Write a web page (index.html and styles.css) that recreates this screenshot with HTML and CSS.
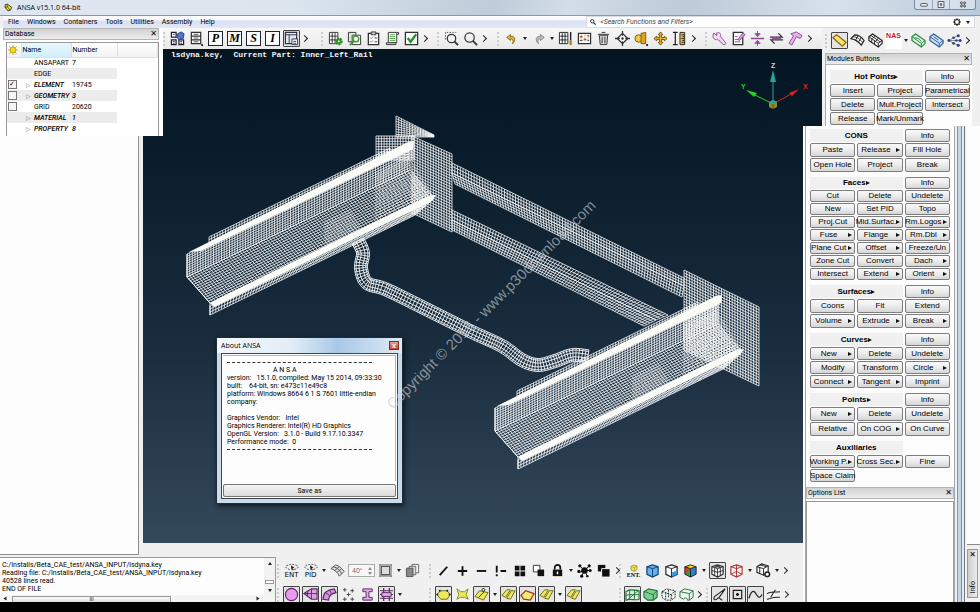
FILE: index.html
```html
<!DOCTYPE html>
<html lang="en">

<head>
    <meta charset="UTF-8">
    <meta name="viewport" content="width=device-width, initial-scale=1.0">
    <title>ANSA v15.1.0 64-bit</title>
    <link rel="stylesheet" href="styles.css">
</head>

<body>
    <!-- icon set -->
    <svg class="defs" aria-hidden="true">
        <symbol id="logo" viewBox="0 0 16 16"><path d="M2 3l4-1 8 6-3 5-4 1-5-6z" fill="#e8d420" stroke="#222" stroke-width="1.4"/><path d="M2 8l4-1 5 6M6 7V2" fill="none" stroke="#222"/></symbol>
        <symbol id="sun" viewBox="0 0 16 16"><path d="M8 0v16M0 8h16M2 2l12 12M14 2L2 14" stroke="#c9a400" stroke-width="1.4"/><circle cx="8" cy="8" r="4.5" fill="#ffd91c" stroke="#a88400"/></symbol>
        <symbol id="gear" viewBox="0 0 16 16"><circle cx="8" cy="8" r="5" fill="none" stroke="#222" stroke-width="2.4"/><path d="M8 0v3M8 13v3M0 8h3M13 8h3M2.5 2.5l2 2M11.5 11.5l2 2M13.5 2.5l-2 2M4.5 11.5l-2 2" stroke="#222" stroke-width="2"/></symbol>
        <symbol id="search" viewBox="0 0 16 16"><circle cx="6" cy="6" r="4.5" fill="none" stroke="#222" stroke-width="2.5"/><path d="M9.5 9.5L15 15" stroke="#222" stroke-width="3"/></symbol>
        <symbol id="parts" viewBox="0 0 16 16"><path d="M1.5 1.5h5v5h-5zM1.5 9.5h5v5h-5zM9.5 9.5h5v5h-5z" fill="#fff" stroke="#223" stroke-width="1.3"/><path d="M3 3.5h2M3 11h2M3 13h2M11 11h2M11 13h2" stroke="#223"/><path d="M8 3l4-2 3 2-1 5-4 1-3-2z" fill="#5673c4" stroke="#24408e"/></symbol>
        <symbol id="cabinet" viewBox="0 0 16 16"><path d="M2.5 1.5h10v4h-10zM2.5 5.5h10v4h-10zM2.5 9.5h10v4h-10z" fill="#fff" stroke="#333" stroke-width="1.3"/><path d="M5 3.5h5M5 7.5h5M5 11.5h5" stroke="#555"/><path d="M13 15h2" stroke="#222" stroke-width="2"/></symbol>
        <symbol id="docs" viewBox="0 0 16 16"><path d="M1.5 1.5h12v12h-12z" fill="#e4e6ee" stroke="#334" stroke-width="1.3"/><path d="M2 4h11M5.5 4v9" stroke="#334"/><path d="M8.5 8.5h6v6h-6z" fill="#fff" stroke="#334"/><path d="M10 11h3M10 13h3" stroke="#334"/></symbol>
        <symbol id="meshgear" viewBox="0 0 16 16"><path d="M1.5 1.5h9v12h-9zM4.5 2v11M7.5 2v11M2 5.5h8M2 9.5h8" fill="#fff" stroke="#333"/><circle cx="11.5" cy="11" r="3" fill="#3a9a2f" stroke="#2b8a22" stroke-width="2.4" stroke-dasharray="2 1"/><circle cx="11.5" cy="11" r="1" fill="#fff"/></symbol>
        <symbol id="copymag" viewBox="0 0 16 16"><path d="M1.5 1.5h8v10h-8z" fill="#dce9d8" stroke="#333"/><path d="M5.5 4.5h9v10h-9z" fill="#fff" stroke="#333"/><circle cx="9.5" cy="8.5" r="3" fill="none" stroke="#3a9a2f" stroke-width="1.5"/><path d="M7.5 11L3 15" stroke="#3a9a2f" stroke-width="2"/></symbol>
        <symbol id="clip" viewBox="0 0 16 16"><path d="M2.5 2.5h11v12h-11z" fill="#fff" stroke="#333" stroke-width="1.4"/><path d="M5.5 1h5v3h-5z" fill="#ccc" stroke="#333"/><path d="M4.5 7l1 1 2-2M4.5 11l1 1 2-2" fill="none" stroke="#3a9a2f"/><path d="M9 7.5h3M9 11.5h3" stroke="#444"/></symbol>
        <symbol id="scroll" viewBox="0 0 16 16"><path d="M3.5 1.5h9v11h-9z" fill="#fff" stroke="#333"/><path d="M1.5 12.5h10v2h-10zM12.5 1.5h2v2h-2" fill="#ddd" stroke="#333"/><path d="M5 4h6M5 6h6M5 8h6M5 10h6" stroke="#4aa53d"/></symbol>
        <symbol id="check" viewBox="0 0 16 16"><path d="M1.5 1.5h13v13h-13z" fill="#fff" stroke="#333" stroke-width="1.4"/><path d="M4 7.5l3 4 6-8" fill="none" stroke="#229320" stroke-width="2.4"/></symbol>
        <symbol id="zoomarea" viewBox="0 0 16 16"><path d="M1.5 9V1.5H13" fill="none" stroke="#444" stroke-dasharray="1.5 1.5"/><circle cx="8" cy="8" r="4.5" fill="none" stroke="#333" stroke-width="1.3"/><path d="M11 11l4 4" stroke="#333" stroke-width="2"/></symbol>
        <symbol id="zoom" viewBox="0 0 16 16"><circle cx="7" cy="7" r="5" fill="none" stroke="#333" stroke-width="1.3"/><path d="M10.5 10.5L15 15" stroke="#333" stroke-width="2"/></symbol>
        <symbol id="undo" viewBox="0 0 16 16"><path d="M1 6l5-4v2.5c6-1 8 5 2.5 10 2-5 0-7-2.5-6.500V10z" fill="#e6b523" stroke="#6b5310"/></symbol>
        <symbol id="redo" viewBox="0 0 16 16"><path d="M15 6l-5-4v2.5c-6-1-8 5-2.5 10-2-5 0-7 2.5-6.500V10z" fill="#bbb" stroke="#777"/></symbol>
        <symbol id="meshbrush" viewBox="0 0 16 16"><path d="M1.5 1.5h9v12h-9zM4.5 2v11M7.5 2v11M2 5.5h8M2 9.5h8" fill="#fff" stroke="#222"/><path d="M13.5 1v9" stroke="#222" stroke-width="1.5"/><path d="M13.5 10v5" stroke="#b97b23" stroke-width="2.5"/></symbol>
        <symbol id="sliders" viewBox="0 0 16 16"><path d="M1.5 2.5h13v11h-13z" fill="#fff" stroke="#333" stroke-width="1.3"/><path d="M4.5 4v8M8.5 4v8M12 4v8" stroke="#777" stroke-dasharray="1 1"/><path d="M3 6h3M7 9h3M11 5h2" stroke="#c0561b" stroke-width="1.6"/><path d="M3 10h3M11 10h2" stroke="#444"/></symbol>
        <symbol id="trash" viewBox="0 0 16 16"><path d="M3.5 4.5h9l-1 10h-7z" fill="#d8d8d8" stroke="#333"/><path d="M2 3.5h12M6 1.5h4M6.5 6v7M9.5 6v7" stroke="#333"/></symbol>
        <symbol id="target" viewBox="0 0 16 16"><path d="M8 2.5L13.5 8 8 13.5 2.5 8z" fill="#fff" stroke="#333" stroke-width="1.4"/><path d="M8 0v5M8 11v5M0 8h5M11 8h5" stroke="#333" stroke-width="1.4"/><circle cx="8" cy="8" r="1.3" fill="#333"/></symbol>
        <symbol id="shapes" viewBox="0 0 16 16"><circle cx="5" cy="8" r="4" fill="#f1c741" stroke="#7c5b0d"/><path d="M7.5 2.5l5-1v12h-5z" fill="#e0a31d" stroke="#7c5b0d"/><path d="M13 15h2" stroke="#222" stroke-width="2"/></symbol>
        <symbol id="move" viewBox="0 0 16 16"><path d="M8 1l2.5 3H9v3h3V5.5L15 8l-3 2.5V9H9v3h1.5L8 15l-2.5-3H7V9H4v1.5L1 8l3-2.5V7h3V4H5.5z" fill="#f0bd2c" stroke="#443208" stroke-width=".8"/></symbol>
        <symbol id="ruler" viewBox="0 0 16 16"><path d="M1 1.5h5M1 14.5h5M3.5 2v12" stroke="#222" stroke-width="1.3"/><path d="M8.5 1.5h5v13h-5z" fill="#efbf3c" stroke="#222"/><path d="M10 4h3M11 6h2M10 8h3M11 10h2M10 12h3" stroke="#222"/></symbol>
        <symbol id="wrench" viewBox="0 0 16 16"><path d="M2 2l3 3V2c3-1 5 1 4 4l6 7-2 2-7-6c-3 1-5-1-5-4z" fill="#f2dcf4" stroke="#91489a"/></symbol>
        <symbol id="note" viewBox="0 0 16 16"><path d="M2.5 1.5h10v13h-10z" fill="#fff" stroke="#333" stroke-width="1.4"/><path d="M4 9h6M4 11.5h6M4 6h3" stroke="#91489a"/><path d="M7 9l6-7 2 2-6 6z" fill="#d49adb" stroke="#91489a"/></symbol>
        <symbol id="align" viewBox="0 0 16 16"><path d="M1 8h14" stroke="#91489a" stroke-width="1.6"/><path d="M5 3h6M5 13h6" stroke="#333"/><path d="M8 0v5M6 4l2 2 2-2zM8 16v-5M6 12l2-2 2 2z" fill="#91489a" stroke="#91489a"/></symbol>
        <symbol id="swap" viewBox="0 0 16 16"><path d="M1 6.5h13l-4-4M15 9.5H2l4 4" fill="none" stroke="#333" stroke-width="1.4"/><path d="M3 8h10" stroke="#91489a"/></symbol>
        <symbol id="hammer" viewBox="0 0 16 16"><path d="M3 3l6-2 6 4-2 3-4-2-5 9-3-2 5-8z" fill="#e3b5e8" stroke="#91489a"/></symbol>
        <symbol id="surf-y" viewBox="0 0 16 16"><path d="M1 5l4-3 10 8-4 4z" fill="#f6ea62" stroke="#8c5f12" stroke-width="1.3"/></symbol>
        <symbol id="surf-k" viewBox="0 0 16 16"><path d="M1 6l4-4c4 0 7 2 10 6l-3 5C9 9 6 7 1 6z" fill="#fff" stroke="#222" stroke-width="1.3"/><path d="M3 4c5 0 8 3 10.5 6.5M6 7.5l3-5M9 9.5l3.5-5" fill="none" stroke="#222"/></symbol>
        <symbol id="solid-k" viewBox="0 0 16 16"><path d="M1 4l4-3 10 7v3l-4 4L1 8z" fill="#fff" stroke="#222" stroke-width="1.3"/><path d="M1 4l10 7 4-3M11 11v4M3 2.5l10 7M4 6v4M7 8v4M8 3L4.5 6M11 5.5L8 9" fill="none" stroke="#222"/></symbol>
        <symbol id="solid-g" viewBox="0 0 16 16"><path d="M1 4l4-3 10 7v3l-4 4L1 8z" fill="#dff3e2" stroke="#258a3c" stroke-width="1.3"/><path d="M1 4l10 7 4-3M11 11v4M4 5l4 1 3 3" fill="none" stroke="#258a3c"/></symbol>
        <symbol id="solid-b" viewBox="0 0 16 16"><path d="M1 4l4-3 10 7v3l-4 4L1 8z" fill="#cfe0f5" stroke="#2d5f9c" stroke-width="1.3"/><path d="M1 4l10 7 4-3M11 11v4M5 4l5 3.5" fill="none" stroke="#2d5f9c"/></symbol>
        <symbol id="dots" viewBox="0 0 16 16"><path d="M2 8l9-5M2 8h11M2 8l9 5" stroke="#888"/><g fill="#24408e"><circle cx="2" cy="8" r="1.5"/><circle cx="12" cy="3" r="1.6"/><circle cx="14" cy="8" r="1.6"/><circle cx="10" cy="8" r="1.4"/><circle cx="12" cy="13" r="1.6"/><circle cx="7" cy="11" r="1.4"/><circle cx="7" cy="5" r="1.4"/></g></symbol>
        <symbol id="cursor" viewBox="0 0 16 8"><ellipse cx="8" cy="4" rx="7" ry="3" fill="none" stroke="#333" stroke-dasharray="2 1.5"/><path d="M7 2l4 3h-2l1 2.5-1 .5-1-2.5-1 1z" fill="#222"/></symbol>
        <symbol id="sheet" viewBox="0 0 16 16"><path d="M1 6l5-4c4 1 7 4 9 7l-5 5C8 10 5 7 1 6z" fill="#ddd" stroke="#555"/><path d="M3.5 4c5 1 7 4 9 7.5M5 8l5-4M7.5 10l5-4" fill="none" stroke="#555"/></symbol>
        <symbol id="frame" viewBox="0 0 16 16"><path d="M3.5 3.5h9v9h-9z" fill="#ddd" stroke="#555" stroke-width="1.4"/><path d="M2 1v14M14 1v14M1 2h14M1 14h14" stroke="#777"/></symbol>
        <symbol id="layers" viewBox="0 0 16 16"><path d="M7.5 1.5h7v9h-7z" fill="#fff" stroke="#666"/><path d="M4.5 3.5h7v9h-7z" fill="#ddd" stroke="#666"/><path d="M1.5 5.5h7v9h-7z" fill="#888" stroke="#555"/></symbol>
        <symbol id="slash" viewBox="0 0 16 16"><path d="M4 13l8-9" stroke="#111" stroke-width="2"/></symbol>
        <symbol id="plus" viewBox="0 0 16 16"><path d="M3 8.5h10M8 3.5v10" stroke="#111" stroke-width="2"/></symbol>
        <symbol id="minus" viewBox="0 0 16 16"><path d="M3 8.5h10" stroke="#111" stroke-width="2"/></symbol>
        <symbol id="bang" viewBox="0 0 16 16"><path d="M4 3v7M4 12v2M8 8.5h6" stroke="#111" stroke-width="2"/></symbol>
        <symbol id="tiles" viewBox="0 0 16 16"><path d="M3 3h5v5H3zM9 3h5v5H9zM3 9h5v5H3zM9 9h5v5H9z" fill="#111"/></symbol>
        <symbol id="invert" viewBox="0 0 16 16"><path d="M2.5 2.5h7v7h-7z" fill="#fff" stroke="#333"/><path d="M7 7h7v7H7z" fill="#111"/></symbol>
        <symbol id="lock" viewBox="0 0 16 16"><path d="M3 7h10v7H3z" fill="#111"/><path d="M5 7V5c0-4 6-4 6 0v2" fill="none" stroke="#111" stroke-width="1.8"/><path d="M8 9v3" stroke="#fff" stroke-width="1.6"/></symbol>
        <symbol id="splat" viewBox="0 0 16 16"><path d="M8 8L3 3M8 8l5-5M8 8l-6 2M8 8h6M8 8l-3 6M8 8l3 6" stroke="#111"/><g fill="#111"><circle cx="8" cy="8" r="3.5"/><circle cx="3" cy="3" r="1.7"/><circle cx="13" cy="3" r="1.7"/><circle cx="2" cy="9" r="1.7"/><circle cx="14" cy="8" r="1.7"/><circle cx="5" cy="14" r="1.7"/><circle cx="11" cy="14" r="1.3"/></g></symbol>
        <symbol id="dup" viewBox="0 0 16 16"><path d="M2 2h8v7H2z" fill="#111"/><path d="M6 6h9v9H6z" fill="#111" stroke="#fff"/></symbol>
        <symbol id="box-y" viewBox="0 0 16 16"><path d="M2 5l5-3 7 2v7l-5 4-7-3z" fill="#f0e64a" stroke="#8f8612" stroke-width="1.4"/><path d="M2 5l7 2 5-3M9 7v8" fill="none" stroke="#8f8612"/></symbol>
        <symbol id="box-b" viewBox="0 0 16 16"><path d="M2 4l6-2 6 2v8l-6 3-6-3z" fill="#63b1ee" stroke="#163f73" stroke-width="1.3"/><path d="M2 4l6 2 6-2M8 6v9" fill="none" stroke="#163f73"/></symbol>
        <symbol id="box-w" viewBox="0 0 16 16"><path d="M2 4l6-2 6 2v8l-6 3-6-3z" fill="#fff" stroke="#222" stroke-width="1.3"/><path d="M8 10l6-2v4l-6 3z" fill="#3b9be0"/><path d="M2 4l6 2 6-2M8 6v9" fill="none" stroke="#222"/></symbol>
        <symbol id="box-c" viewBox="0 0 16 16"><path d="M2 4l6-2 6 2-6 2z" fill="#f0d21b"/><path d="M2 4l6 2v9l-6-3z" fill="#2c9b45"/><path d="M8 6l6-2v8l-6 3z" fill="#2f7bd0"/><path d="M2 4l4 1v4l-4 2z" fill="#dc3a22"/><path d="M2 4l6-2 6 2v8l-6 3-6-3zM2 4l6 2 6-2M8 6v9" fill="none" stroke="#222"/></symbol>
        <symbol id="box-m" viewBox="0 0 16 16"><path d="M2 4l6-2 6 2v8l-6 3-6-3z" fill="#fff" stroke="#222" stroke-width="1.2"/><path d="M2 4l6 2 6-2M8 6v9M2 8l6 2 6-2M5 5v8M11 5v8M5 3l6 2M11 3L5 5" fill="none" stroke="#222" stroke-width=".9"/></symbol>
        <symbol id="box-r" viewBox="0 0 16 16"><path d="M2 4l6-2 6 2v8l-6 3-6-3z" fill="#fdf0f0" stroke="#a33" stroke-width="1.2"/><path d="M2 4l6 2 6-2M8 6v9M2 12l6-3 6 3M8 2v7" fill="none" stroke="#a33"/></symbol>
        <symbol id="box-g" viewBox="0 0 16 16"><path d="M1 4l5-3 7 2v7l-5 3-7-3z" fill="#fff" stroke="#222" stroke-width="1.2"/><path d="M1 4l7 2 5-3M8 6v7M4 2l7 2M4 5v6" fill="none" stroke="#222"/><circle cx="12" cy="12" r="2.5" fill="#fff" stroke="#222" stroke-width="1.6"/></symbol>
        <symbol id="ball" viewBox="0 0 16 16"><circle cx="8" cy="8" r="6.5" fill="#e79bf0" stroke="#5a2a63" stroke-width="1.2"/></symbol>
        <symbol id="wedge" viewBox="0 0 16 16"><path d="M1 7l8-5h6v11H9z" fill="#e0a3e8" stroke="#5a2a63" stroke-width="1.2"/><path d="M9 2v11M1 7h14M5 4v6" stroke="#5a2a63"/></symbol>
        <symbol id="bend" viewBox="0 0 16 16"><path d="M1 13c0-7 4-10 12-11l2 4c-5 1-8 3-8 8z" fill="#d98fe3" stroke="#5a2a63" stroke-width="1.2"/><path d="M4 6l4 3M8 3l2 4" stroke="#5a2a63"/></symbol>
        <symbol id="plusses" viewBox="0 0 16 16"><path d="M4 1v4M2 3h4M12 2v4M10 4h4M8 6v4M6 8h4M4 11v4M2 13h4M12 11v4M10 13h4" stroke="#444"/></symbol>
        <symbol id="beam" viewBox="0 0 16 16"><path d="M3 2h10v3H9.5v6H13v3H3v-3h3.5V5H3z" fill="#e3a7eb" stroke="#5a2a63"/></symbol>
        <symbol id="net" viewBox="0 0 16 16"><path d="M1 4h14M1 8h14M1 12h14M5 1v14M11 1v14" stroke="#5a2a63" stroke-width="1.3"/><path d="M3 6h10v4H3z" fill="#e3a7eb" stroke="#5a2a63"/></symbol>
        <symbol id="yel" viewBox="0 0 16 16"><path d="M1 8l4-4h7l3 4-3 5H5z" fill="#eee95a" stroke="#6f6b12"/><path d="M4 4h.1M12 4h.1M1.5 8h.1M14.5 8h.1" stroke="#222" stroke-width="2" stroke-linecap="round"/></symbol>
        <symbol id="yel-star" viewBox="0 0 16 16"><path d="M2 2l4 3h4l4-3-2 6 2 5-4-2H6l-4 2 2-5z" fill="#eee95a" stroke="#8a861c"/></symbol>
        <symbol id="yel-cut" viewBox="0 0 16 16"><path d="M1 10l5-6 9 2-5 8z" fill="#eee95a" stroke="#6f6b12"/><path d="M5 11l6-6" stroke="#333"/><circle cx="10" cy="3" r="1.5" fill="#fff" stroke="#222"/></symbol>
        <symbol id="yel-two" viewBox="0 0 16 16"><path d="M1 9l5-6h4l-5 8zM6 12l5-8h4l-5 9z" fill="#eee95a" stroke="#6f6b12"/></symbol>
        <symbol id="yel-red" viewBox="0 0 16 16"><path d="M1 9l5-5 9 3-4 7-7-1z" fill="#f2ec70" stroke="#a5361c" stroke-width="1.3"/></symbol>
        <symbol id="grn-mesh" viewBox="0 0 16 16"><path d="M1 5c4-3 7-2 14-1v9c-5 2-8-1-14 1z" fill="#dff3e2" stroke="#22703a" stroke-width="1.2"/><path d="M1 9c5-2 9 0 14-1M5 3v10M10 3v10M2 14L14 4" fill="none" stroke="#22703a"/></symbol>
        <symbol id="grn-solid" viewBox="0 0 16 16"><path d="M1 5l5-3 9 2v7l-4 3H5L1 11z" fill="#7fcf93" stroke="#22703a" stroke-width="1.2"/><path d="M1 5c4 0 6 3 10 3l4-4M11 8v6" fill="none" stroke="#22703a"/></symbol>
        <symbol id="grn-dot" viewBox="0 0 16 16"><path d="M1 5l5-3 9 2v7l-4 3H5L1 11z" fill="#e8f5ea" stroke="#222" stroke-dasharray="2 1"/><path d="M1 5c4 0 6 3 10 3l4-4M11 8v6M5 6v7M8 3v9" fill="none" stroke="#222" stroke-dasharray="2 1"/></symbol>
        <symbol id="grn-line" viewBox="0 0 16 16"><path d="M1 5l5-3 9 2v7l-4 3H9c0-3-3-3-4-1l-4-2z" fill="#eef8f0" stroke="#22703a"/><path d="M1 5l10 2 4-3M11 7v7" fill="none" stroke="#22703a"/></symbol>
        <symbol id="pen" viewBox="0 0 16 16"><path d="M14 2L3 10c-3 3 1 5 3 2 2-2 3 2 5 2M14 2L7 12" fill="none" stroke="#222" stroke-width="1.2"/></symbol>
        <symbol id="point" viewBox="0 0 16 16"><path d="M3.5 3.5h9v9h-9z" fill="none" stroke="#222" stroke-width="1.3"/><circle cx="8" cy="8" r="1.5"/></symbol>
        <symbol id="curve" viewBox="0 0 16 16"><path d="M1 12C4 2 7 4 9 8s4 4 6 0" fill="none" stroke="#222" stroke-width="1.3"/></symbol>
        <symbol id="curves" viewBox="0 0 16 16"><path d="M1 7c4-3 8-1 14-2M1 13c4 0 5-3 14-2M5 11l5-8" fill="none" stroke="#222" stroke-width="1.1"/></symbol>
    </svg>

    <header class="titlebar">
        <svg class="app-logo"><use href="#logo"/></svg>
        <h1>ANSA v15.1.0 64-bit</h1>
        <div class="window-buttons">
            <button aria-label="Minimize"><svg viewBox="0 0 12 8"><rect x="2" y="3" width="8" height="3" rx="1" fill="#fff" stroke="#333"/></svg></button>
            <button aria-label="Restore"><svg viewBox="0 0 12 8"><path d="M2.5 .5h7v7h-7zM5 3h2v2H5z" fill="#fff" stroke="#333"/></svg></button>
            <button class="wide" aria-label="Close window"><svg viewBox="0 0 12 8"><path d="M3 1l6 6M9 1L3 7" stroke="#333" stroke-width="2.6"/><path d="M3 1l6 6M9 1L3 7" stroke="#fff"/></svg></button>
        </div>
    </header>

    <div class="menubar">
        <nav>
            <button>File</button>
            <button>Windows</button>
            <button>Containers</button>
            <button>Tools</button>
            <button>Utilities</button>
            <button>Assembly</button>
            <button>Help</button>
        </nav>
        <div class="search">
            <svg><use href="#search"/></svg>
            <input type="text" aria-label="Search" placeholder="&lt;Search Functions and Filters&gt;">
            <svg class="search-gear"><use href="#gear"/></svg>
            <i class="caret"></i>
        </div>
    </div>

    <main class="workspace">
        <section class="viewport">
            <p class="status">lsdyna.key,&nbsp; Current Part: Inner_Left_Rail</p>
            <svg class="scene" viewBox="143 49 679 494">
                <g id="mesh"></g>
                <g class="triad">
                    <path d="M773 104V76" stroke="#2aa39c"/><path d="M770 82l3-12 3 12z" fill="#2aa39c"/>
                    <path d="M773 104l20-11" stroke="#e02020"/><path d="M789 93l10-4-7 7z" fill="#e02020"/>
                    <path d="M773 104l-20-10" stroke="#22d322"/><path d="M757 93l-11-3 8 7z" fill="#22d322"/>
                    <path d="M769 102l4-2 4 2v5l-4 2-4-2z" fill="#8f8a2a"/><path d="M769 102l4 2 4-2-4-2z" fill="#27a0a8"/><path d="M773 104v5" stroke="#55521a"/>
                    <text x="771" y="68" fill="#c8d4dc">Z</text>
                    <text x="803" y="89" fill="#e02020">X</text>
                    <text x="741" y="89" fill="#22d322">Y</text>
                </g>
            </svg>

            <div class="dialog" role="dialog" aria-label="About ANSA">
                <div class="dialog-title">
                    <h2>About ANSA</h2>
                    <button aria-label="Close">x</button>
                </div>
                <div class="dialog-body">
                    <div class="dialog-text">
                        <hr>
                        <p class="product">A N S A</p>
                        <p>version:&nbsp;&nbsp; 15.1.0, compiled: May 15 2014, 09:33:30</p>
                        <p>built:&nbsp;&nbsp;&nbsp; 64-bit, sn: e473c11e49c8</p>
                        <p>platform: Windows 8664 6 1 S 7601 little-endian</p>
                        <p>company:</p>
                        <p>&nbsp;</p>
                        <p>Graphics Vendor:&nbsp;&nbsp; Intel</p>
                        <p>Graphics Renderer: Intel(R) HD Graphics</p>
                        <p>OpenGL Version:&nbsp;&nbsp; 3.1.0 - Build 9.17.10.3347</p>
                        <p>Performance mode:&nbsp; 0</p>
                        <hr>
                    </div>
                    <button class="save">Save as</button>
                </div>
            </div>

            <svg class="scene overlay" viewBox="143 49 679 494">
                <text class="watermark" transform="translate(393 410) rotate(-45)">Copyright © 2015 - www.p30download.com</text>
            </svg>
        </section>

        <section class="database">
            <header class="panel-title"><h2>Database</h2><button aria-label="Close panel">✕</button></header>
            <div class="tree">
                <table>
                    <thead>
                        <tr><th class="c-check"><svg><use href="#sun"/></svg></th><th class="c-name">Name</th><th class="c-number">Number</th><th></th></tr>
                    </thead>
                    <tbody>
                        <tr><td></td><td class="leaf">ANSAPART</td><td>7</td><td></td></tr>
                        <tr><td></td><td class="leaf">EDGE</td><td></td><td></td></tr>
                        <tr class="branch"><td><input type="checkbox" aria-label="ELEMENT" checked></td><td><span>▷</span>ELEMENT</td><td class="plain">19745</td><td></td></tr>
                        <tr class="branch"><td><input type="checkbox" aria-label="GEOMETRY"></td><td><span>▷</span>GEOMETRY</td><td>3</td><td></td></tr>
                        <tr><td><input type="checkbox" aria-label="GRID"></td><td class="leaf">GRID</td><td>20620</td><td></td></tr>
                        <tr class="branch"><td></td><td><span>▷</span>MATERIAL</td><td>1</td><td></td></tr>
                        <tr class="branch"><td></td><td><span>▷</span>PROPERTY</td><td>8</td><td></td></tr>
                    </tbody>
                </table>
            </div>
        </section>

        <div class="tree-rest"></div>

        <div class="toolbar top-tools">
            <div class="group g1">
                <button class="tool"><svg><use href="#parts"/></svg></button>
                <button class="tool"><svg><use href="#cabinet"/></svg></button>
                <button class="tool letter">P</button>
                <button class="tool letter">M</button>
                <button class="tool letter">S</button>
                <button class="tool letter">I</button>
                <button class="tool on"><svg><use href="#docs"/></svg></button>
                <i class="more"></i>
            </div>
            <div class="group g2">
                <button class="tool"><svg><use href="#meshgear"/></svg></button>
                <button class="tool"><svg><use href="#copymag"/></svg></button>
                <button class="tool"><svg><use href="#clip"/></svg></button>
                <button class="tool"><svg><use href="#scroll"/></svg></button>
                <button class="tool"><svg><use href="#check"/></svg></button>
                <i class="more"></i>
            </div>
            <div class="group g3">
                <button class="tool"><svg><use href="#zoomarea"/></svg></button>
                <button class="tool"><svg><use href="#zoom"/></svg></button>
                <i class="more"></i>
            </div>
            <div class="group g4">
                <button class="tool small"><svg><use href="#undo"/></svg></button>
                <i class="caret"></i>
                <button class="tool small"><svg><use href="#redo"/></svg></button>
                <i class="caret"></i>
                <button class="tool"><svg><use href="#meshbrush"/></svg></button>
                <button class="tool"><svg><use href="#sliders"/></svg></button>
                <button class="tool"><svg><use href="#trash"/></svg></button>
                <button class="tool"><svg><use href="#target"/></svg></button>
                <button class="tool"><svg><use href="#shapes"/></svg></button>
                <button class="tool"><svg><use href="#move"/></svg></button>
                <button class="tool"><svg><use href="#ruler"/></svg></button>
                <i class="more"></i>
            </div>
            <div class="group g5">
                <button class="tool"><svg><use href="#wrench"/></svg></button>
                <button class="tool"><svg><use href="#note"/></svg></button>
                <button class="tool"><svg><use href="#align"/></svg></button>
                <button class="tool"><svg><use href="#swap"/></svg></button>
                <button class="tool"><svg><use href="#hammer"/></svg></button>
                <i class="more"></i>
            </div>
        </div>

        <section class="modules">
            <div class="toolbar module-tools">
                <div class="group">
                    <button class="tool on"><svg><use href="#surf-y"/></svg></button>
                    <button class="tool"><svg><use href="#surf-k"/></svg></button>
                    <button class="tool"><svg><use href="#solid-k"/></svg></button>
                    <button class="tool nas">NAS</button>
                    <i class="caret"></i>
                    <button class="tool"><svg><use href="#solid-g"/></svg></button>
                    <button class="tool"><svg><use href="#solid-b"/></svg></button>
                    <button class="tool"><svg><use href="#dots"/></svg></button>
                    <i class="more"></i>
                </div>
            </div>
            <header class="panel-title"><h2>Modules Buttons</h2><button aria-label="Close panel">✕</button></header>
            <div class="module-body">
                <div class="cmds">
                    <h3>Hot Points<i class="arrow"></i></h3><button>Info</button>
                    <button>Insert</button><button>Project</button><button>Parametrical</button>
                    <button>Delete</button><button>Mult.Project</button><button>Intersect</button>
                    <button>Release</button><button>Mark/Unmark</button>
                </div>
            </div>
        </section>

        <section class="side">
            <div class="side-main">
                <div class="groups">
                    <div class="cmds roomy">
                        <h3>CONS</h3><button>Info</button>
                        <button>Paste</button><button class="sub">Release</button><button>Fill Hole</button>
                        <button>Open Hole</button><button>Project</button><button>Break</button>
                    </div>
                    <div class="cmds tight">
                        <h3>Faces<i class="arrow"></i></h3><button>Info</button>
                        <button>Cut</button><button>Delete</button><button>Undelete</button>
                        <button>New</button><button>Set PID</button><button>Topo</button>
                        <button>Proj.Cut</button><button class="sub">Mid.Surfac.</button><button class="sub">Rm.Logos</button>
                        <button class="sub">Fuse</button><button class="sub">Flange</button><button class="sub">Rm.Dbl</button>
                        <button class="sub">Plane Cut</button><button class="sub">Offset</button><button>Freeze/Un</button>
                        <button>Zone Cut</button><button>Convert</button><button class="sub">Dach</button>
                        <button>Intersect</button><button class="sub">Extend</button><button class="sub">Orient</button>
                    </div>
                    <div class="cmds roomy">
                        <h3>Surfaces<i class="arrow"></i></h3><button>Info</button>
                        <button>Coons</button><button>Fit</button><button>Extend</button>
                        <button class="sub">Volume</button><button class="sub">Extrude</button><button class="sub">Break</button>
                    </div>
                    <div class="cmds">
                        <h3>Curves<i class="arrow"></i></h3><button>Info</button>
                        <button class="sub">New</button><button>Delete</button><button>Undelete</button>
                        <button>Modify</button><button>Transform</button><button class="sub">Circle</button>
                        <button class="sub">Connect</button><button class="sub">Tangent</button><button>Imprint</button>
                    </div>
                    <div class="cmds roomy">
                        <h3>Points<i class="arrow"></i></h3><button>Info</button>
                        <button class="sub">New</button><button>Delete</button><button>Undelete</button>
                        <button>Relative</button><button class="sub">On COG</button><button>On Curve</button>
                    </div>
                    <div class="cmds">
                        <h3>Auxiliaries</h3><span></span>
                        <button class="sub">Working P.</button><button class="sub">Cross Sec.</button><button>Fine</button>
                        <button>Space Claim</button>
                    </div>
                </div>
                <header class="panel-title"><h2>Options List</h2><button aria-label="Close panel">✕</button></header>
                <div class="options"></div>
            </div>
            <div class="side-frame"></div>
            <div class="side-info">
                <div class="info-blank"></div>
                <div class="info-tab"><button aria-label="Close info">✕</button><span>Info</span></div>
            </div>
        </section>

        <section class="bottom">
            <div class="log">
                <div class="log-text">
                    <p>C:/Installs/Beta_CAE_test/ANSA_INPUT/lsdyna.key</p>
                    <p>Reading file: C:/Installs/Beta_CAE_test/ANSA_INPUT/lsdyna.key</p>
                    <p>40528 lines read.</p>
                    <p>END OF FILE</p>
                </div>
                <div class="vscroll"><i class="caret up"></i><b></b><i class="caret"></i></div>
                <div class="hscroll"><i class="caret left"></i><b>III</b><i class="caret right"></i></div>
            </div>
            <div class="bottom-tools">
                <div class="toolbar">
                    <div class="group b1">
                        <button class="tool text"><svg><use href="#cursor"/></svg>ENT</button>
                        <button class="tool text"><svg><use href="#cursor"/></svg>PID</button>
                        <i class="caret"></i>
                        <button class="tool"><svg><use href="#sheet"/></svg></button>
                        <span class="angle"><input type="text" aria-label="Angle" value="40°"><span><i class="caret up"></i><i class="caret"></i></span></span>
                        <button class="tool"><svg><use href="#frame"/></svg></button>
                        <i class="caret"></i>
                        <button class="tool"><svg><use href="#layers"/></svg></button>
                    </div>
                    <div class="group b2">
                        <button class="tool"><svg><use href="#slash"/></svg></button>
                        <button class="tool"><svg><use href="#plus"/></svg></button>
                        <button class="tool"><svg><use href="#minus"/></svg></button>
                        <button class="tool"><svg><use href="#bang"/></svg></button>
                        <button class="tool"><svg><use href="#tiles"/></svg></button>
                        <button class="tool"><svg><use href="#invert"/></svg></button>
                        <button class="tool"><svg><use href="#lock"/></svg></button>
                        <i class="caret"></i>
                        <button class="tool"><svg><use href="#splat"/></svg></button>
                        <button class="tool"><svg><use href="#dup"/></svg></button>
                        <i class="more"></i>
                    </div>
                    <div class="group b3">
                        <button class="tool text tiny"><svg><use href="#box-y"/></svg>ENT.</button>
                        <button class="tool"><svg><use href="#box-b"/></svg></button>
                        <button class="tool"><svg><use href="#box-w"/></svg></button>
                        <button class="tool"><svg><use href="#box-c"/></svg></button>
                        <i class="caret"></i>
                        <button class="tool on"><svg><use href="#box-m"/></svg></button>
                        <button class="tool"><svg><use href="#box-r"/></svg></button>
                        <i class="caret"></i>
                        <button class="tool"><svg><use href="#box-g"/></svg></button>
                        <i class="caret"></i>
                        <i class="more"></i>
                    </div>
                </div>
                <div class="toolbar">
                    <div class="group b1">
                        <button class="tool on"><svg><use href="#ball"/></svg></button>
                        <button class="tool on"><svg><use href="#wedge"/></svg></button>
                        <button class="tool on"><svg><use href="#bend"/></svg></button>
                        <button class="tool"><svg><use href="#plusses"/></svg></button>
                        <button class="tool"><svg><use href="#beam"/></svg></button>
                        <button class="tool on"><svg><use href="#net"/></svg></button>
                        <i class="caret"></i>
                    </div>
                    <div class="group b2">
                        <button class="tool on"><svg><use href="#yel"/></svg></button>
                        <button class="tool"><svg><use href="#yel-star"/></svg></button>
                        <button class="tool on"><svg><use href="#yel-cut"/></svg></button>
                        <i class="caret"></i>
                        <button class="tool on"><svg><use href="#yel-two"/></svg></button>
                        <button class="tool on"><svg><use href="#yel-red"/></svg></button>
                        <button class="tool on"><svg><use href="#yel-two"/></svg></button>
                        <i class="caret"></i>
                        <button class="tool on"><svg><use href="#yel-two"/></svg></button>
                    </div>
                    <div class="group b4">
                        <button class="tool on"><svg><use href="#grn-mesh"/></svg></button>
                        <button class="tool"><svg><use href="#grn-solid"/></svg></button>
                        <button class="tool"><svg><use href="#grn-dot"/></svg></button>
                        <button class="tool"><svg><use href="#grn-line"/></svg></button>
                        <i class="more"></i>
                    </div>
                    <div class="group b5">
                        <button class="tool on"><svg><use href="#pen"/></svg></button>
                        <button class="tool on"><svg><use href="#point"/></svg></button>
                        <button class="tool on"><svg><use href="#curve"/></svg></button>
                        <button class="tool"><svg><use href="#curves"/></svg></button>
                        <i class="more"></i>
                    </div>
                </div>
            </div>
        </section>
    </main>

    <footer class="edge"></footer>

    <script src="mesh.js"></script>
</body>

</html>
```

FILE: styles.css
```css
* {
    box-sizing: border-box;
}

body {
    margin: 0;
    height: 100vh;
    display: flex;
    flex-direction: column;
    overflow: hidden;
    background: #f0f0f0;
    color: #000;
    font: 7px/8px Roboto, "Liberation Sans", sans-serif;
}

h1, h2, h3, p {
    margin: 0;
    font-size: inherit;
    font-weight: normal;
}

button, input {
    margin: 0;
    padding: 0;
    border: 0;
    background: none;
    color: inherit;
    font: inherit;
}

.defs {
    display: none;
}

/* title and menu */
.titlebar {
    flex: none;
    height: 16px;
    display: flex;
    align-items: center;
    gap: 4px;
    padding: 0 4px;
    background: linear-gradient(100deg, #dfe6ee 0%, #dce5ee 30%, #bfccd9 50%, #d3dde7 58%, #bdcad8 70%, #d8e1ea 85%, #b9c9da 100%);
    border-bottom: 1px solid #8c98a4;
}

.titlebar h1 {
    flex: 1;
    font: 7px/8px "Open Sans", sans-serif;
}

.app-logo {
    width: 9px;
    height: 9px;
}

.window-buttons {
    align-self: flex-start;
    display: flex;
    height: 10px;
    border: 1px solid #7c8c9e;
    border-top: 0;
    border-radius: 0 0 3px 3px;
    background: #d5e0ec;
}

.window-buttons button {
    width: 17px;
    display: flex;
    align-items: center;
    justify-content: center;
}

.window-buttons button + button {
    border-left: 1px solid #98a8ba;
}

.window-buttons .wide {
    width: 26px;
}

.window-buttons svg {
    width: 10px;
    height: 7px;
}

.menubar {
    flex: none;
    height: 12px;
    display: flex;
    margin: 0 5px 0 3px;
    background: linear-gradient(#fff, #f3f5fc 35%, #d9dff3 40%, #e3e8f7);
}

.menubar nav {
    flex: 1;
    display: flex;
    gap: 8px;
    padding-left: 5px;
}

.search {
    flex: 0 0 40%;
    display: flex;
    align-items: center;
    gap: 4px;
    padding: 0 3px;
    background: #fff;
    border: 1px solid #d8dce6;
}

.search svg {
    width: 6px;
    height: 6px;
}

.search .search-gear {
    width: 8px;
    height: 8px;
}

.search input {
    flex: 1;
    font-style: italic;
}

.search input::placeholder {
    color: #444;
}

/* workspace: the 3D view fills the middle, docked panels lie over its corners */
.workspace {
    flex: 1;
    min-height: 0;
    display: grid;
    grid-template-columns: 143px 20px 1fr 19px 158px;
    grid-template-rows: 21px 77px 10px 1fr 12px 47px;
}

.viewport {
    grid-area: 2 / 2 / 5 / 5;
    position: relative;
    overflow: hidden;
    background: linear-gradient(#041522, #0b1e2d 25%, #1a2e40 62%, #34495b);
}

.status {
    position: absolute;
    left: 28px;
    top: 2px;
    color: #f4f4f4;
    font: bold 8px/8px "Liberation Mono", monospace;
    white-space: pre;
}

.scene {
    display: block;
    width: 100%;
    height: 100%;
}

.overlay {
    position: absolute;
    inset: 0;
    pointer-events: none;
}

.watermark {
    fill: #c4c9cf;
    fill-opacity: .65;
    font: 15px "Liberation Sans", sans-serif;
}

.triad {
    fill: none;
    font: bold 7px "Liberation Sans", sans-serif;
}

.database {
    grid-area: 1 / 1 / 4 / 3;
    display: flex;
    flex-direction: column;
    padding-left: 3px;
    background: #fff;
    z-index: 1;
}

.tree-rest {
    grid-area: 4 / 1 / 6 / 2;
    margin-right: 4px;
    background: #fdfdfd;
    border: solid #8b8d90;
    border-width: 0 1px 1px 0;
}

.panel-title {
    flex: none;
    height: 12px;
    display: flex;
    align-items: center;
    justify-content: space-between;
    padding: 0 1px;
    background: linear-gradient(#d2d2d2, #ececec);
    border: 1px solid #b4b4b4;
}

.panel-title button {
    font: 8px/8px "DejaVu Sans", sans-serif;
}

.database .panel-title {
    margin-right: 4px;
}

.tree {
    flex: 1;
    min-height: 0;
    margin: 2px 4px 0 3px;
    overflow: hidden;
    border: solid #9a9a9a;
    border-width: 1px 1px 0 1px;
}

.tree table {
    width: 100%;
    border-collapse: collapse;
    table-layout: fixed;
}

.tree th {
    height: 14px;
    padding: 0 1px;
    font-weight: normal;
    text-align: left;
    background: linear-gradient(#fff, #f1f2f4);
    border: solid #dcdfe3;
    border-width: 0 1px 1px 0;
}

.tree .c-check {
    width: 14px;
}

.tree .c-check svg {
    display: block;
    width: 10px;
    height: 10px;
}

.tree .c-name {
    width: 50px;
    background: linear-gradient(#e9f7fd, #cfeefa);
}

.tree .c-number {
    width: 46px;
}

.tree td {
    height: 11px;
    padding: 0 1px;
}

.tree tbody tr:nth-child(even) td:not(:last-child) {
    background: #ececec;
}

.tree .leaf {
    padding-left: 13px;
}

.tree .branch td {
    font-style: italic;
    font-weight: 500;
}

.tree .branch td.plain {
    font-style: normal;
    font-weight: normal;
}

.tree .branch span {
    display: inline-block;
    width: 8px;
    margin-left: 4px;
    color: #777;
    font: 6px/8px "DejaVu Sans", sans-serif;
}

.tree input {
    display: block;
    appearance: none;
    width: 9px;
    height: 9px;
    border: 1px solid #777;
    background: #f6f6f6;
}

.tree input:checked::after {
    content: "✓";
    display: block;
    font: bold 7px/7px "DejaVu Sans", sans-serif;
}

/* toolbars */
.toolbar {
    display: flex;
    min-width: 0;
    overflow: hidden;
}

.top-tools {
    grid-area: 1 / 3 / 2 / 5;
    background: linear-gradient(#f8f8f8, #e9e9e9);
}

.group {
    display: flex;
    align-items: center;
    gap: 2px;
    min-width: 0;
}

.group::before {
    content: "";
    flex: none;
    width: 2px;
    height: 14px;
    border-left: 2px dotted #ccc;
}

.g1 { flex: 158 1 0; }
.g2 { flex: 116 1 0; }
.g3 { flex: 60 1 0; }
.g4 { flex: 208 1 0; }
.g5 { flex: 117 1 0; }

.tool {
    flex: none;
    width: 17px;
    height: 17px;
    display: flex;
    align-items: center;
    justify-content: center;
}

.tool svg {
    width: 15px;
    height: 15px;
}

.tool.small svg {
    width: 12px;
    height: 12px;
}

.tool.on {
    background: #e4e4e4;
    border: 1px solid #444;
    border-radius: 1px;
}

.tool.letter {
    width: 15px;
    height: 15px;
    margin: 0 1px;
    background: #fff;
    border: 1px solid #223;
    font: italic bold 12px/13px "Liberation Serif", serif;
}

.tool.nas {
    align-items: flex-start;
    background: #fff;
    color: #c8141c;
    font: bold 7px/8px "Liberation Sans", sans-serif;
}

.tool.text {
    flex-direction: column;
    justify-content: flex-end;
    font: 7px/8px "DejaVu Sans", sans-serif;
}

.tool.text svg {
    width: 14px;
    height: 8px;
}

.tool.tiny {
    font: bold 6px/7px "Liberation Serif", serif;
}

.caret {
    flex: none;
    width: 0;
    height: 0;
    margin: 0 1px;
    border: 2px solid transparent;
    border-top: 3px solid #222;
    border-bottom: 0;
}

.caret.up { transform: rotate(180deg); }
.caret.left { transform: rotate(90deg); }
.caret.right { transform: rotate(-90deg); }

.more {
    flex: none;
    width: 5px;
    height: 5px;
    border: solid #222;
    border-width: 1px 1px 0 0;
    transform: rotate(45deg);
}

/* module buttons */
.modules {
    grid-area: 1 / 5 / 3 / 6;
    display: flex;
    flex-direction: column;
    padding: 0 8px 0 3px;
    background: #f0f0f0;
    z-index: 1;
}

.module-tools {
    flex: none;
    height: 25px;
}

.module-tools .group {
    gap: 1px;
}

.module-tools .group::before {
    margin-right: 1px;
}

.module-body {
    flex: 1;
    padding: 5px 2px 0 4px;
    background: #fdfdfd;
    border-left: 1px solid #aaa;
}

.cmds {
    display: grid;
    grid-template-columns: repeat(3, 1fr);
    grid-auto-rows: 13px;
    gap: 1px 2px;
    font: 8px/8px "Liberation Sans", sans-serif;
}

.cmds.tight {
    grid-auto-rows: 12px;
}

.cmds.roomy {
    grid-template-rows: 13px;
    grid-auto-rows: 14px;
}

.cmds h3 {
    grid-column: span 2;
    display: flex;
    align-items: center;
    justify-content: center;
    background: #f0f0f0;
    font-weight: bold;
}

.cmds button {
    position: relative;
    min-width: 0;
    display: flex;
    align-items: center;
    justify-content: center;
    white-space: nowrap;
    background: linear-gradient(#fafafa, #ececec 50%, #d6d6d6);
    border: 1px solid #7d7d7d;
    border-radius: 2px;
}

.cmds .sub {
    padding-right: 8px;
}

.cmds .sub::after {
    content: "";
    position: absolute;
    right: 2px;
}

.arrow,
.cmds .sub::after {
    border: 2px solid transparent;
    border-left: 4px solid #111;
    border-right: 0;
}

/* right side below the modules */
.side {
    grid-area: 3 / 4 / 7 / 6;
    display: flex;
    background: #fdfdfd;
    z-index: 1;
}

.side-main {
    flex: 1;
    display: flex;
    flex-direction: column;
    margin-left: 2px;
    background: #fdfdfd;
    border: solid #a5a9ad;
    border-width: 0 1px;
}

.groups {
    display: flex;
    flex-direction: column;
    gap: 5px;
    padding: 3px 4px 5px;
}

.options {
    flex: 1;
    margin-top: 2px;
    border: 1px solid #9a9a9a;
    border-bottom: 0;
}

.side-frame {
    width: 12px;
    background: linear-gradient(90deg, #eef0f2 0 2px, #8d959c 2px 3px, #c4d5e4 3px 6px, #a98c26 6px 7px, #e2e9ef 7px 9px, #6f7a84 9px 10px, #f4f4f4 10px);
}

.side-info {
    width: 13px;
    display: flex;
    flex-direction: column;
    gap: 4px;
    padding-bottom: 4px;
    background: #f0f0f0;
}

.info-blank {
    flex: 1;
    background: #fdfdfd;
    border-bottom: 1px solid #888;
}

.info-tab {
    height: 49px;
    width: 11px;
    display: flex;
    flex-direction: column;
    align-items: center;
    justify-content: space-between;
    padding: 1px 0 4px;
    background: linear-gradient(90deg, #cdcdcd, #ececec);
    border: 1px solid #999;
}

.info-tab button {
    font: 8px/8px "DejaVu Sans", sans-serif;
}

.info-tab span {
    writing-mode: vertical-rl;
    transform: rotate(180deg);
}

/* bottom row */
.bottom {
    grid-area: 6 / 1 / 7 / 4;
    display: flex;
    min-height: 0;
}

.log {
    flex: none;
    width: 276px;
    margin-top: 2px;
    display: grid;
    grid-template-columns: 1fr 11px;
    grid-template-rows: 1fr 7px;
    background: #fdfdfd;
    border: solid #999;
    border-width: 1px 1px 0 0;
}

.log-text {
    padding: 3px 2px 0;
    overflow: hidden;
    white-space: nowrap;
}

.vscroll {
    display: flex;
    flex-direction: column;
    align-items: center;
    justify-content: space-between;
    padding: 4px 0 3px;
    background: #f2f2f2;
}

.vscroll b {
    width: 9px;
    height: 4px;
    margin: 10px 0 0;
    border: 1px solid #999;
    background: #fff;
}

.hscroll {
    grid-column: span 2;
    display: flex;
    align-items: center;
    justify-content: space-between;
    padding: 0 14px 0 2px;
    background: #f4f4f4;
}

.hscroll b {
    flex: 0 0 159px;
    height: 6px;
    margin: 0 auto 0 4px;
    border: 1px solid #999;
    border-bottom: 0;
    background: linear-gradient(#fafafa, #dcdcdc);
    font: 5px/5px "Liberation Sans", sans-serif;
    text-align: center;
}

.bottom-tools {
    flex: 1;
    min-width: 0;
    display: flex;
    flex-direction: column;
    gap: 7px;
    padding: 7px 0 0 1px;
    overflow: hidden;
}

.bottom-tools .toolbar {
    flex: none;
}

.b1 { flex: 152 1 0; }
.b2 { flex: 190 1 0; }
.b3 { flex: 184 1 0; }
.b4 { flex: 87 1 0; }
.b5 { flex: 97 1 0; }

.b4, .b5 {
    gap: 1px;
}

.angle {
    width: 27px;
    height: 13px;
    display: flex;
    align-items: center;
    padding: 0 1px 0 3px;
    border: 1px solid #aaa;
    background: #f7f7f7;
    color: #777;
}

.angle input {
    flex: 1;
    min-width: 0;
}

.angle span {
    display: flex;
    flex-direction: column;
    gap: 2px;
    opacity: .5;
}

.edge {
    flex: none;
    height: 10px;
    background: #000;
}

/* about window */
.dialog {
    position: absolute;
    left: 73px;
    top: 288px;
    width: 187px;
    height: 167px;
    display: flex;
    flex-direction: column;
    padding: 0 4px 4px;
    background: #c9dcec;
    border: 1px solid #222c36;
    box-shadow: 1px 2px 5px #000a;
}

.dialog-title {
    flex: none;
    height: 15px;
    display: flex;
    align-items: center;
    justify-content: space-between;
    margin: 0 -4px;
    padding: 0 3px 0 4px;
    background: linear-gradient(90deg, #f2f7fb, #e3edf7 40%, #a9c8e8 65%, #dfeaf5);
}

.dialog-title h2 {
    font: 7px/8px "Open Sans", sans-serif;
}

.dialog-title button {
    width: 10px;
    height: 9px;
    border: 1px solid #7a2d22;
    background: linear-gradient(#e9a394, #c34a35);
    color: #fff;
    font: bold 7px/6px "Liberation Sans", sans-serif;
}

.dialog-body {
    flex: 1;
    display: flex;
    flex-direction: column;
    justify-content: space-between;
    padding: 1px;
    background: #fdfdfd;
    border: 1px solid #444;
}

.dialog-text {
    flex: 1;
    margin-bottom: 3px;
    padding: 6px 4px 0;
    border: solid #b5b5b5;
    border-width: 1px 1px 0 0;
    white-space: nowrap;
}

.dialog-text hr {
    width: 145px;
    margin: 0 0 3px;
    border: 0;
    border-top: 1px dashed #333;
}

.dialog-text hr:last-child {
    margin: 3px 0 0;
}

.dialog-text .product {
    padding-left: 46px;
}

.save {
    height: 13px;
    background: linear-gradient(#f5f5f5, #dcdcdc);
    border: 1px solid #777;
    border-radius: 2px;
}
```

FILE: mesh.js
```javascript
const mesh = document.getElementById("mesh");

function add(d, attrs) {
    const path = document.createElementNS("http://www.w3.org/2000/svg", "path");
    path.setAttribute("d", d);
    for (const key in attrs) path.setAttribute(key, attrs[key]);
    mesh.appendChild(path);
}

function mix(a, b, t) {
    return [a[0] + (b[0] - a[0]) * t, a[1] + (b[1] - a[1]) * t];
}

function seg(a, b) {
    return `M${a[0].toFixed(1)} ${a[1].toFixed(1)}L${b[0].toFixed(1)} ${b[1].toFixed(1)}`;
}

// shell mesh between four corners
function quad(a, b, c, d, nu, nv, opacity = 0.85) {
    let path = "";
    for (let i = 0; i <= nu; i++) path += seg(mix(a, b, i / nu), mix(d, c, i / nu));
    for (let j = 0; j <= nv; j++) path += seg(mix(a, d, j / nv), mix(b, c, j / nv));
    add(path, { fill: "none", stroke: "#fff", "stroke-width": 0.9, "stroke-opacity": opacity });
}

// densely meshed edge that reads as a solid band
function band(points) {
    add("M" + points.join("L") + "Z", { fill: "#fbfbf8" });
}

// pipe swept along a centre line
function tube(points, width) {
    const line = [];
    for (let i = 0; i < points.length - 1; i++) {
        const p0 = points[Math.max(i - 1, 0)], p1 = points[i], p2 = points[i + 1];
        const p3 = points[Math.min(i + 2, points.length - 1)];
        const steps = Math.ceil(Math.hypot(p2[0] - p1[0], p2[1] - p1[1]) / 3);
        for (let s = 0; s < steps; s++) {
            const t = s / steps;
            line.push([0, 1].map(k => 0.5 * (2 * p1[k] + (p2[k] - p0[k]) * t +
                (2 * p0[k] - 5 * p1[k] + 4 * p2[k] - p3[k]) * t * t +
                (3 * p1[k] - p0[k] - 3 * p2[k] + p3[k]) * t * t * t)));
        }
    }
    let path = "", last = null;
    for (let i = 0; i < line.length - 1; i++) {
        const dx = line[i + 1][0] - line[i][0], dy = line[i + 1][1] - line[i][1];
        const len = Math.hypot(dx, dy);
        const ring = [-1, -0.75, -0.3, 0.3, 0.75, 1].map(k =>
            [line[i][0] - dy / len * k * width / 2, line[i][1] + dx / len * k * width / 2]);
        path += seg(ring[0], ring[5]);
        if (last) ring.forEach((p, k) => path += seg(last[k], p));
        last = ring;
    }
    add(path, { fill: "none", stroke: "#fff", "stroke-width": 1, "stroke-opacity": 0.85 });
}

// cross members
quad([452, 163], [684, 278], [684, 286], [452, 173], 84, 3);
quad([452, 173], [684, 286], [682, 297], [455, 184], 84, 4);
quad([452, 210], [668, 315], [656, 320], [452, 220], 78, 3);
quad([452, 220], [656, 320], [644, 326], [452, 230], 78, 4);

tube([[358, 241], [363, 253], [361, 268], [367, 283], [385, 289], [420, 306], [470, 331], [502, 346], [522, 360], [538, 365], [555, 361], [573, 355], [592, 357]], 13);

// end plates
quad([396, 116], [434, 135], [434, 137], [396, 137], 14, 8);
quad([376, 136], [414, 136], [414, 160], [376, 160], 14, 9);
quad([412, 136], [452, 154], [452, 232], [412, 213], 15, 28);
quad([684, 270], [759, 307], [759, 386], [684, 350], 28, 28);

// both rails share one profile, shifted across the frame
function rail(x, y) {
    const p = (px, py) => [px + x, py + y];
    quad(p(209, 237), p(390, 148), p(390, 155), p(209, 245), 66, 3);
    quad(p(187, 254), p(410, 146), p(410, 170), p(187, 277), 84, 10);
    quad(p(187, 277), p(410, 170), p(433, 197), p(210, 303), 84, 14);
    quad(p(376, 172), p(408, 157), p(432, 195), p(376, 222), 12, 17, 0.4);
    quad(p(325, 222), p(350, 210), p(360, 228), p(325, 244), 10, 8, 0.3);
    quad(p(210, 306), p(430, 202), p(415, 215), p(210, 315), 72, 3);
    band([p(189, 252), p(205, 244), p(408, 142), p(414, 141), p(413, 149), p(201, 251)]);
    band([p(210, 303), p(225, 295), p(428, 196), p(436, 195), p(432, 201), p(214, 307)]);
    add("M" + [p(187, 254), p(187, 277), p(210, 303), p(210, 315)].join("L"), { fill: "none", stroke: "#fff" });
}

rail(0, 0);
rail(308, 154);
```
